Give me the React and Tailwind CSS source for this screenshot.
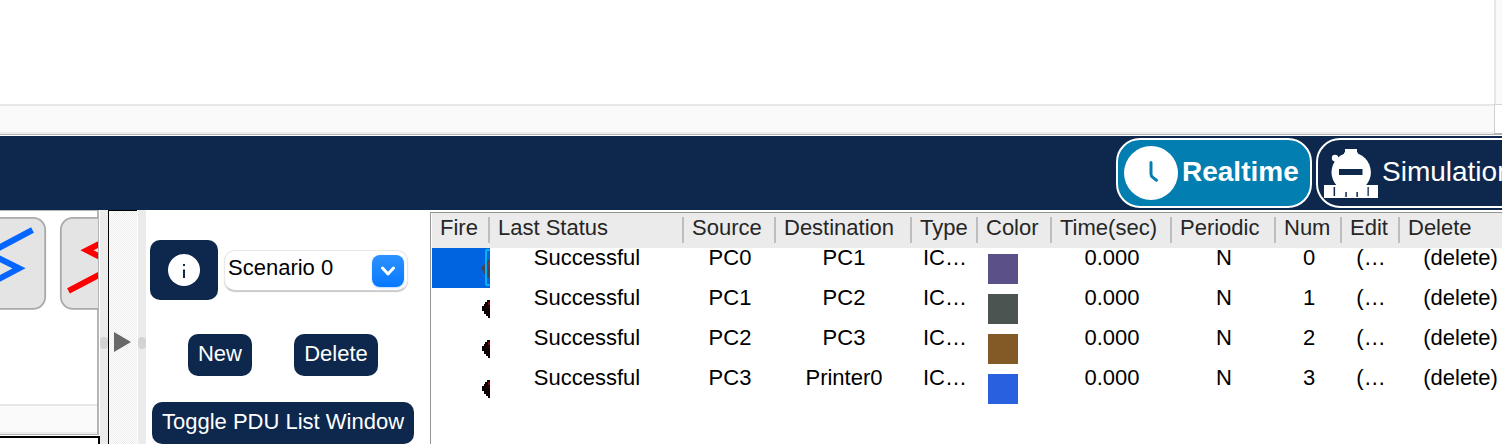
const columns = ["Fire", "Last Status", "Source", "Destination", "Type", "Color", "Time(sec)", "Periodic", "Num", "Edit", "Delete"];

const rows = [
  { source: "PC0", destination: "PC1", color: "bg-[#5b5088]" },
  { source: "PC1", destination: "PC2", color: "bg-[#4b5450]" },
  { source: "PC2", destination: "PC3", color: "bg-[#835a25]" },
  { source: "PC3", destination: "Printer0", color: "bg-[#2860e0]" },
];

const tableGrid = "grid grid-cols-[58px_194px_92px_136px_66px_74px_120px_104px_66px_58px_121px]";

function Canvas() {
  return (
    <div className="flex h-[136px] w-full shrink-0">
      <div className="flex w-[1494px] shrink-0 flex-col">
        <div className="h-[104px]" />
        <div className="h-[30px] border-y-2 border-t-[#e7e7e7] border-b-[#ececec] bg-[#fafafa]" />
        <div className="h-[1px] bg-[#b4b4b4]" />
      </div>
      <div className="flex flex-1 flex-col">
        <div className="h-[104px] border-l-2 border-[#e7e7e7] bg-[#fafafa]" />
        <div className="h-[1px] bg-[#d5d5d5]" />
        <div className="h-[28px] border-l border-[#d0d0d0] bg-white" />
        <div className="h-[2px] bg-[#b4b4b4]" />
      </div>
    </div>
  );
}

function ClockIcon() {
  return (
    <svg width="54" height="54" viewBox="0 0 54 54" className="shrink-0">
      <circle cx="27" cy="27" r="27" fill="#fff" />
      <path d="M27 16.500v11.500q0 2 1.800 3.400l3.700 2.800" fill="none" stroke="#037eb0" strokeWidth="3" strokeLinecap="round" />
    </svg>
  );
}

function StopwatchIcon() {
  return (
    <svg width="54" height="50" viewBox="0 0 54 50" className="shrink-0">
      <path d="M21 1h12v3l1 1v3H20V5l1-1z" fill="#fff" />
      <circle cx="11" cy="10" r="3.200" fill="#fff" />
      <path d="M9 12l4-4 3 3-4 4z" fill="#fff" />
      <circle cx="27.200" cy="24.200" r="19.700" fill="#fff" />
      <path d="M0 37h54v13H0z" fill="#fff" />
      <path d="M15 21h23.500v6H15zM9.600 39h1.500v9H9.600zM21.300 44h1.500v5h-1.500zM32.400 44h1.500v5h-1.500zM43.500 39h1.300v9h-1.300z" fill="#0e284d" />
    </svg>
  );
}

function ModeBar() {
  return (
    <div className="flex h-[74px] w-full shrink-0 gap-1 overflow-hidden bg-[#0e284d] pt-[2px] pl-[1116px] text-[28px] text-white">
      <div className="flex h-[70px] w-[196px] shrink-0 items-center rounded-[24px] border-2 border-white bg-[#037eb0] pl-[6px]">
        <ClockIcon />
        <span className="ml-1 pb-[3px] font-bold">Realtime</span>
      </div>
      <div className="flex h-[70px] w-[210px] shrink-0 items-center rounded-[24px] border-2 border-white pl-[6px]">
        <StopwatchIcon />
        <span className="ml-1 pb-[3px]">Simulation</span>
      </div>
    </div>
  );
}

function Connections() {
  return (
    <div className="flex w-[100px] shrink-0 flex-col">
      <div className="flex h-[225px] w-[99px] flex-col border-t border-r-[2px] border-b border-[#b4b4b4] bg-white">
        <svg width="98" height="193" viewBox="0 211 98 193" className="block shrink-0">
          <rect x="-50" y="217.800" width="95.200" height="91" rx="12" fill="#e4e4e4" stroke="#a9a9a9" strokeWidth="1.800" />
          <rect x="60.800" y="217.800" width="95" height="91" rx="12" fill="#e4e4e4" stroke="#a9a9a9" strokeWidth="1.800" />
          <path d="M32.500 230L-8 251.500V255L19 268.300L-8 282.500" fill="none" stroke="#0566ff" strokeWidth="6" />
          <path d="M120 233.500L87 250.300L114 264V267L68.500 290.800" fill="none" stroke="#f00" strokeWidth="6" />
        </svg>
        <div className="flex-1 border-t-2 border-b-2 border-t-[#e7e7e7] border-b-[#ececec] bg-[#fafafa]" />
      </div>
      <div className="mt-[1px] h-[8px] border-t-2 border-r-2 border-black bg-white" />
    </div>
  );
}

function Splitter() {
  return (
    <div className="flex w-[46px] shrink-0">
      <div className="flex w-[8px] items-center bg-[#ebebeb]">
        <div className="mt-[32px] h-[12px] w-[8px] rounded-[4px] bg-[#d3d3d3]" />
      </div>
      <div className="w-[29px] border-t border-l border-black bg-[#efefef] bg-[conic-gradient(#fff_25%,#ececec_0_50%,#fff_0_75%,#ececec_0)] bg-[length:2px_2px]">
        <svg width="28" height="233" viewBox="109 211 28 233">
          <path d="M114 332L131 342L114 352z" fill="#686868" />
        </svg>
      </div>
      <div className="ml-[1px] flex w-[8px] items-center bg-[#ebebeb]">
        <div className="mt-[32px] h-[12px] w-[8px] rounded-[4px] bg-[#d3d3d3]" />
      </div>
    </div>
  );
}

function Scenario() {
  return (
    <div className="w-[284px] shrink-0 bg-white pt-[30px] pl-1 text-[22px] text-white">
      <div className="flex items-center">
        <button className="flex h-[60px] w-[68px] items-center justify-center rounded-[10px] bg-[#0e284d]">
          <svg width="32" height="32" viewBox="0 0 32 32">
            <circle cx="16" cy="16" r="16" fill="#fff" />
            <path d="M15 10h2v2h-2zM15 15.500h2v8.500h-2z" fill="#0e284d" />
          </svg>
        </button>
        <div className="mt-[1px] ml-[6px] flex h-[41px] w-[184px] items-center justify-between rounded-[11px] border border-[#e8e8e8] border-b-[#cfcfcf] bg-white pr-[3px] pl-[3px] text-black shadow-[0_1px_1px_rgba(0,0,0,0.22)]">
          <span className="pb-[7px]">Scenario 0</span>
          <div className="flex h-[32px] w-[32px] items-center justify-center rounded-[8px] bg-linear-to-b from-[#2b92ff] to-[#0377ff] shadow-[0_1px_2px_rgba(0,120,255,0.3)]">
            <svg width="16" height="10" viewBox="0 0 16 10">
              <path d="M2.500 2L8 8L13.500 2" fill="none" stroke="#fff" strokeWidth="3" strokeLinecap="round" strokeLinejoin="round" />
            </svg>
          </div>
        </div>
      </div>
      <div className="mt-[34px] ml-[38px] flex gap-[42px]">
        <button className="h-[42px] w-[64px] rounded-[10px] bg-[#0e284d] pb-[4px]">New</button>
        <button className="h-[42px] w-[84px] rounded-[10px] bg-[#0e284d] pb-[4px]">Delete</button>
      </div>
      <button className="mt-[26px] ml-[2px] h-[42px] w-[262px] rounded-[10px] bg-[#0e284d] pb-[4px] whitespace-nowrap">Toggle PDU List Window</button>
    </div>
  );
}

function FireIcon({ selected }) {
  return (
    <svg width="8" height="40" viewBox="0 0 8 40" shapeRendering="crispEdges">
      <path d="M0 18h2v-2h1v-2h2v-2h3v18H6v-2H4v-2H2v-3H0z" fill={selected ? "#40465a" : "#0a0000"} />
      <path d="M6 14h2v3h-2z" fill={selected ? "#8a3346" : "#8a0000"} />
      <path d="M6 18h2v2h-2z" fill={selected ? "#683850" : "#3a0000"} />
      {selected && <path d="M8 2H5L4 3V36L5 37H8" fill="none" stroke="#00b4f0" strokeWidth="2" />}
    </svg>
  );
}

function PduTable() {
  return (
    <div className="mt-[2px] w-[1072px] shrink-0 overflow-hidden border-t border-l border-[#949494] bg-white pl-[1px] text-[22px]">
      <div className={`${tableGrid} h-[35px] bg-[#ebebeb] text-[#262626]`}>
        {columns.map((name, index) => (
          <div key={name} className="flex pt-[4px]">
            <span className="-mt-[4px] flex-1 pl-[8px] leading-[29px] whitespace-nowrap">{name}</span>
            {index < columns.length - 1 && <span className="h-[26px] w-[2px] bg-[#bdbdbd]" />}
          </div>
        ))}
      </div>
      {rows.map((row, index) => (
        <div key={row.source} className={`${tableGrid} h-[40px] text-center leading-[19px] whitespace-nowrap text-black`}>
          <div className={index === 0 ? "flex justify-end bg-[#0064e1]" : "flex justify-end"}>
            <FireIcon selected={index === 0} />
          </div>
          <span>Successful</span>
          <span>{row.source}</span>
          <span>{row.destination}</span>
          <span>IC…</span>
          <span className={`mt-[6px] ml-[10px] h-[30px] w-[30px] ${row.color}`} />
          <span>0.000</span>
          <span>N</span>
          <span>{index}</span>
          <span>(…</span>
          <span>(delete)</span>
        </div>
      ))}
    </div>
  );
}

export default function App() {
  return (
    <div className="flex h-[444px] w-[1502px] flex-col overflow-hidden bg-white font-['Liberation_Sans',Arial,sans-serif]">
      <Canvas />
      <ModeBar />
      <div className="flex h-[234px] w-full overflow-hidden">
        <Connections />
        <Splitter />
        <Scenario />
        <PduTable />
      </div>
    </div>
  );
}
